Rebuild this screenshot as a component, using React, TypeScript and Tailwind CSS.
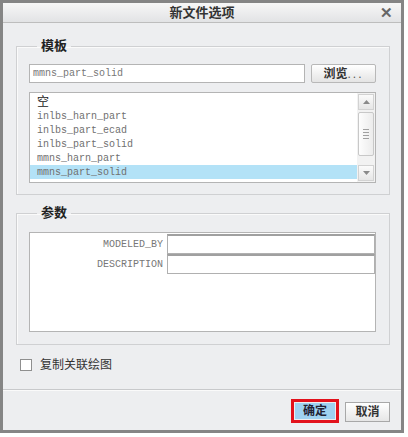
import { FC } from "react";

const mono = { fontFamily: '"Liberation Mono", "DejaVu Sans Mono", monospace' };
const cjk = { fontFamily: '"Liberation Sans", "Noto Sans CJK SC", sans-serif' };

const TEMPLATES = [
  "inlbs_harn_part",
  "inlbs_part_ecad",
  "inlbs_part_solid",
  "mmns_harn_part",
  "mmns_part_solid",
];

const PARAMS = ["MODELED_BY", "DESCRIPTION"];

const ScrollArrow: FC<{ up?: boolean }> = ({ up }) => (
  <div className="flex h-[16px] items-center justify-center border border-[#d2d2d2] bg-gradient-to-b from-[#fbfbfb] to-[#e6e6e6]">
    <svg width="7" height="4" viewBox="0 0 7 4">
      <path d={up ? "M0 4 L3.5 0 L7 4 Z" : "M0 0 L3.5 4 L7 0 Z"} fill="#8a8a8a" />
    </svg>
  </div>
);

const TemplateList: FC = () => (
  <div className="flex h-[91px] border border-[#b4b4b4] bg-white">
    <div className="flex-1 pt-[2px]" style={mono}>
      <div className="flex h-[14px] items-center pl-[7px] text-[12px] text-[#222]" style={cjk}>
        空
      </div>
      {TEMPLATES.map((t, i) => (
        <div
          key={t}
          className={
            "flex h-[14px] items-center pl-[7px] text-[10px] text-[#707070] " +
            (i === TEMPLATES.length - 1 ? "bg-[#b3e2f7]" : "")
          }
        >
          {t}
        </div>
      ))}
    </div>
    <div className="flex w-[18px] flex-col gap-[2px] bg-[#f2f2f2] p-[1px]">
      <ScrollArrow up />
      <div className="flex h-[44px] items-center justify-center rounded-[2px] border border-[#c8c8c8] bg-gradient-to-r from-[#fdfdfd] to-[#ececec]">
        <div className="flex flex-col gap-[2px]">
          <div className="h-px w-[6px] bg-[#a0a0a0]" />
          <div className="h-px w-[6px] bg-[#a0a0a0]" />
          <div className="h-px w-[6px] bg-[#a0a0a0]" />
          <div className="h-px w-[6px] bg-[#a0a0a0]" />
        </div>
      </div>
      <div className="flex-1" />
      <ScrollArrow />
    </div>
  </div>
);

const Group: FC<{ title: string; className?: string; children: React.ReactNode }> = ({
  title,
  className,
  children,
}) => (
  <fieldset
    className={
      "ml-[13px] mr-[11px] border border-[#cfd0d2] pl-[12px] pr-[13px] shadow-[inset_1px_1px_0_#fafafa] " +
      (className ?? "")
    }
  >
    <legend className="ml-[8px] px-[4px] text-[13px] font-bold leading-[16px] text-[#222]" style={cjk}>
      {title}
    </legend>
    {children}
  </fieldset>
);

export default function App() {
  return (
    <div className="h-[437px] w-[408px] bg-white" style={cjk}>
      <div className="flex h-[433px] w-[404px] flex-col border-[3px] border-[#858585] bg-[#edeef0]">
        <div className="relative flex h-[20px] items-center justify-center border-b border-[#bdbdbd] bg-gradient-to-b from-[#f7f7f7] to-[#e2e3e5]">
          <span className="text-[13px] font-bold text-[#333]">新文件选项</span>
          <span className="absolute right-[8px] top-[2px] text-[15px] leading-[15px] font-bold text-[#666]">✕</span>
        </div>

        <Group title="模板" className="mt-[15px] pb-[11px]">
          <div className="mt-[10px] flex gap-[6px]">
            <div
              className="flex h-[19px] w-[276px] items-center border border-[#b4b4b4] bg-white pl-[3px] text-[10px] text-[#777]"
              style={mono}
            >
              mmns_part_solid
            </div>
            <button className="flex h-[19px] flex-1 items-center justify-center rounded-[2px] border border-[#b8b8b8] bg-gradient-to-b from-[#ffffff] to-[#e4e4e4] text-[12px] font-bold text-[#333]">
              浏览<span className="font-normal tracking-[2px] text-[#555]">...</span>
            </button>
          </div>
          <div className="mt-[9px]">
            <TemplateList />
          </div>
        </Group>

        <Group title="参数" className="mt-[10px] pb-[12px]">
          <div className="mt-[11px] h-[100px] border border-[#b4b4b4] bg-white pt-[1px]">
            {PARAMS.map((p) => (
              <div key={p} className="flex h-[20px]">
                <div
                  className="flex w-[137px] items-center justify-end pr-[4px] text-[10px] text-[#777]"
                  style={mono}
                >
                  {p}
                </div>
                <div className="flex-1 border border-t-2 border-[#b0b0b0] border-t-[#a0a0a0] bg-white" />
              </div>
            ))}
          </div>
        </Group>

        <label className="ml-[17px] mt-[13px] flex h-[14px] items-center gap-[8px]">
          <span className="h-[12px] w-[12px] border border-[#8f8f8f] bg-white" />
          <span className="text-[12px] leading-[14px] text-[#333]">复制关联绘图</span>
        </label>

        <div className="mt-[17px] flex flex-1 justify-end gap-[6px] border-t border-[#c8c9cb] pr-[11px] pt-[9px] shadow-[inset_0_1px_0_#fafafa]">
          <div className="h-[24px] w-[48px] border-[3px] border-[#e2121c] p-[1px]">
            <button className="flex h-full w-full items-center justify-center bg-[#9fd2f1] text-[12px] font-bold text-[#223]">
              确定
            </button>
          </div>
          <button className="mt-[3px] flex h-[20px] w-[45px] items-center justify-center border border-[#a8a8a8] bg-gradient-to-b from-[#ffffff] to-[#e6e6e6] text-[12px] font-bold text-[#333]">
            取消
          </button>
        </div>
      </div>
    </div>
  );
}
